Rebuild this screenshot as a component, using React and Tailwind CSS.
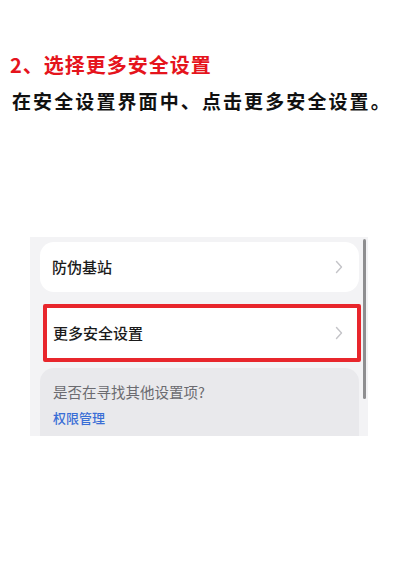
import React from "react";

const cjk = { fontFamily: '"Noto Sans CJK SC", "Noto Sans", sans-serif' };

const Chevron = () => (
  <svg width="8" height="14" viewBox="0 0 8 14" fill="none">
    <path d="M1.5 1.5 L6.5 7 L1.5 12.5" stroke="#c4c4c8" strokeWidth="1.4" strokeLinecap="round" strokeLinejoin="round" />
  </svg>
);

const App = () => {
  return (
    <div className="w-[400px] h-[567px] bg-white overflow-hidden" style={cjk}>
      <div className="pt-[52px] pl-[10px]">
        <h2 className="text-[20px] leading-[26px] font-bold text-[#e5141c] tracking-[1px]">
          2、选择更多安全设置
        </h2>
        <p className="mt-[10px] pl-[2px] text-[19px] leading-[26px] font-bold text-[#111] tracking-[2.1px]">
          在安全设置界面中、点击更多安全设置。
        </p>
      </div>

      <div className="mt-[123px] ml-[30px] w-[338px] h-[199px] bg-[#f3f3f5] flex">
        <div className="flex-1 flex flex-col pt-[5px] pl-[10px]">
          <div className="w-[319px] h-[50px] bg-white rounded-[14px] flex items-center justify-between pl-[12px] pr-[16px]">
            <span className="text-[15px] font-medium text-[#1a1a1a]">防伪基站</span>
            <Chevron />
          </div>
          <div className="mt-[12px] ml-[3px] w-[318px] h-[58px] bg-white border-[4px] border-[#e8262c] rounded-[2px] flex items-center justify-between pl-[6px] pr-[14px]">
            <span className="text-[15px] font-medium text-[#1a1a1a]">更多安全设置</span>
            <Chevron />
          </div>
          <div className="mt-[6px] w-[319px] flex-1 bg-[#e9e9ec] rounded-t-[14px] pl-[13px] pt-[14px]">
            <p className="text-[14.5px] leading-[20px] text-[#6b6b70]">是否在寻找其他设置项?</p>
            <p className="mt-[7px] text-[13px] leading-[18px] font-medium text-[#3a6ed6]">权限管理</p>
          </div>
        </div>
        <div className="w-[9px] pt-[2px]">
          <div className="ml-[2px] w-[3px] h-[160px] bg-[#8e8e90] rounded-full" />
        </div>
      </div>
    </div>
  );
};

export default App;
